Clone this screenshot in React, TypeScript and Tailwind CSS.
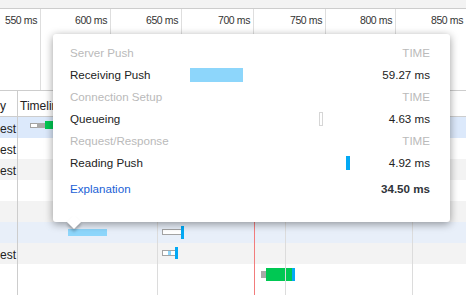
import React from "react";

type Bar = { x: number; y: number; w: number; h: number; cls: string };
type Row = { bg: string; label: string; bars: Bar[] };

const ticks = [
    { label: "550 ms", cls: "w-[41px] border-r" },
    { label: "600 ms", cls: "w-[70px] border-r" },
    { label: "650 ms", cls: "w-[71px] border-r" },
    { label: "700 ms", cls: "w-[72px] border-r" },
    { label: "750 ms", cls: "w-[72px] border-r" },
    { label: "800 ms", cls: "w-[70px] border-r" },
    { label: "850 ms", cls: "flex-1" },
];

const outline = "border border-[#a3a3a3] bg-white";
const gray = "bg-[#a9a9a9]";
const green = "bg-[#00c853]";
const blue = "bg-[#03a9f4]";
const light = "bg-[#8dd6fb]";

const rows: Row[] = [
    {
        bg: "bg-[#dce9fb]",
        label: "est",
        bars: [
            { x: 12, y: 6, w: 8, h: 5, cls: outline },
            { x: 19, y: 6, w: 8, h: 5, cls: gray },
            { x: 27, y: 4, w: 20, h: 8, cls: green },
        ],
    },
    { bg: "bg-white", label: "est", bars: [] },
    { bg: "bg-[#f3f3f3]", label: "est", bars: [] },
    { bg: "bg-white", label: "", bars: [] },
    { bg: "bg-[#f3f3f3]", label: "", bars: [] },
    {
        bg: "bg-[#e8eff9]",
        label: "",
        bars: [
            { x: 50, y: 7, w: 39, h: 7, cls: light },
            { x: 144, y: 7, w: 20, h: 6, cls: outline },
            { x: 163, y: 4, w: 3, h: 13, cls: blue },
        ],
    },
    {
        bg: "bg-[#f3f3f3]",
        label: "est",
        bars: [
            { x: 144, y: 7, w: 14, h: 6, cls: outline },
            { x: 150, y: 8, w: 3, h: 4, cls: light },
            { x: 157, y: 4, w: 3, h: 12, cls: blue },
        ],
    },
    {
        bg: "bg-white",
        label: "",
        bars: [
            { x: 243, y: 7, w: 5, h: 7, cls: gray },
            { x: 248, y: 4, w: 26, h: 13, cls: green },
            { x: 274, y: 4, w: 3, h: 13, cls: blue },
        ],
    },
];

const tipRows = [
    { label: "Server Push", head: true },
    { label: "Receiving Push", value: "59.27 ms", bar: { x: 0, w: 53, cls: light } },
    { label: "Connection Setup", head: true },
    { label: "Queueing", value: "4.63 ms", bar: { x: 129, w: 4, cls: "border border-[#d6d6d6] bg-white" } },
    { label: "Request/Response", head: true },
    { label: "Reading Push", value: "4.92 ms", bar: { x: 156, w: 4, cls: blue } },
];

export default function App() {
    return (
        <div className="relative w-[466px] h-[295px] overflow-hidden bg-white text-[#222] font-['Liberation_Sans',Arial,sans-serif]">
            {/* top strip */}
            <div className="h-[9px] bg-[#f3f3f3] border-b border-[#cdcdcd]" />

            {/* ruler */}
            <div className="flex h-[82px] border-b border-[#cdcdcd]">
                {ticks.map((t) => (
                    <div
                        key={t.label}
                        className={`${t.cls} border-[#dedede] pt-[4px] pr-[3px] text-right text-[10.5px] tracking-[-0.4px] text-[#333]`}
                    >
                        {t.label}
                    </div>
                ))}
            </div>

            {/* table header */}
            <div className="flex h-[26px] border-b border-[#cdcdcd] text-[12px]">
                <div className="w-[18px] border-r border-[#cdcdcd] pt-[6px] overflow-hidden">y</div>
                <div className="flex-1 pl-[2px] pt-[6px]">Timeline</div>
            </div>

            {/* table body */}
            <div className="relative">
                {rows.map((r, i) => (
                    <div key={i} className={`flex h-[21px] ${r.bg} text-[12px]`}>
                        <div className="w-[18px] border-r border-[#cdcdcd] pt-[3px] overflow-hidden">
                            {r.label}
                        </div>
                        <div className="relative flex-1">
                            {r.bars.map((b, j) => (
                                <div
                                    key={j}
                                    className={`absolute ${b.cls}`}
                                    style={{ left: b.x, top: b.y, width: b.w, height: b.h }}
                                />
                            ))}
                        </div>
                    </div>
                ))}
                <div className="flex h-[21px]">
                    <div className="w-[18px] border-r border-[#cdcdcd]" />
                </div>
                {/* grid lines */}
                <div className="absolute top-0 bottom-0 left-[157px] w-px bg-[#dcdcdc]" />
                <div className="absolute top-0 bottom-0 left-[285px] w-px bg-[#dcdcdc]" />
                <div className="absolute top-0 bottom-0 left-[412px] w-px bg-[#dcdcdc]" />
                <div className="absolute top-0 bottom-0 left-[254px] w-px bg-[#f27c7c]" />
            </div>

            {/* tooltip */}
            <div className="absolute left-[53px] top-[34px] w-[397px] h-[188px] rounded-[3px] bg-white shadow-[0_2px_8px_rgba(0,0,0,0.4)] pl-[17px] pr-[20px] pt-[8px] text-[11.6px]">
                <div className="absolute left-[16px] bottom-[-5px] w-[10px] h-[10px] rotate-45 bg-white shadow-[2px_2px_3px_rgba(0,0,0,0.25)]" />
                <div className="relative">
                    {tipRows.map((r) => (
                        <div key={r.label} className="flex items-center h-[22px]">
                            <div className={`w-[120px] ${r.head ? "text-[#bababa]" : "text-[#222]"}`}>
                                {r.label}
                            </div>
                            <div className="relative flex-1 h-full">
                                {r.bar && (
                                    <div
                                        className={`absolute top-[4px] h-[14px] ${r.bar.cls}`}
                                        style={{ left: r.bar.x, width: r.bar.w }}
                                    />
                                )}
                            </div>
                            <div className={`w-[80px] text-right ${r.head ? "text-[#bababa]" : "text-[#222]"}`}>
                                {r.head ? "TIME" : r.value}
                            </div>
                        </div>
                    ))}
                    <div className="flex items-center h-[22px] mt-[4px]">
                        <div className="flex-1 text-[#1a5fd6]">Explanation</div>
                        <div className="font-bold text-[#30343a]">34.50 ms</div>
                    </div>
                </div>
            </div>
        </div>
    );
}
